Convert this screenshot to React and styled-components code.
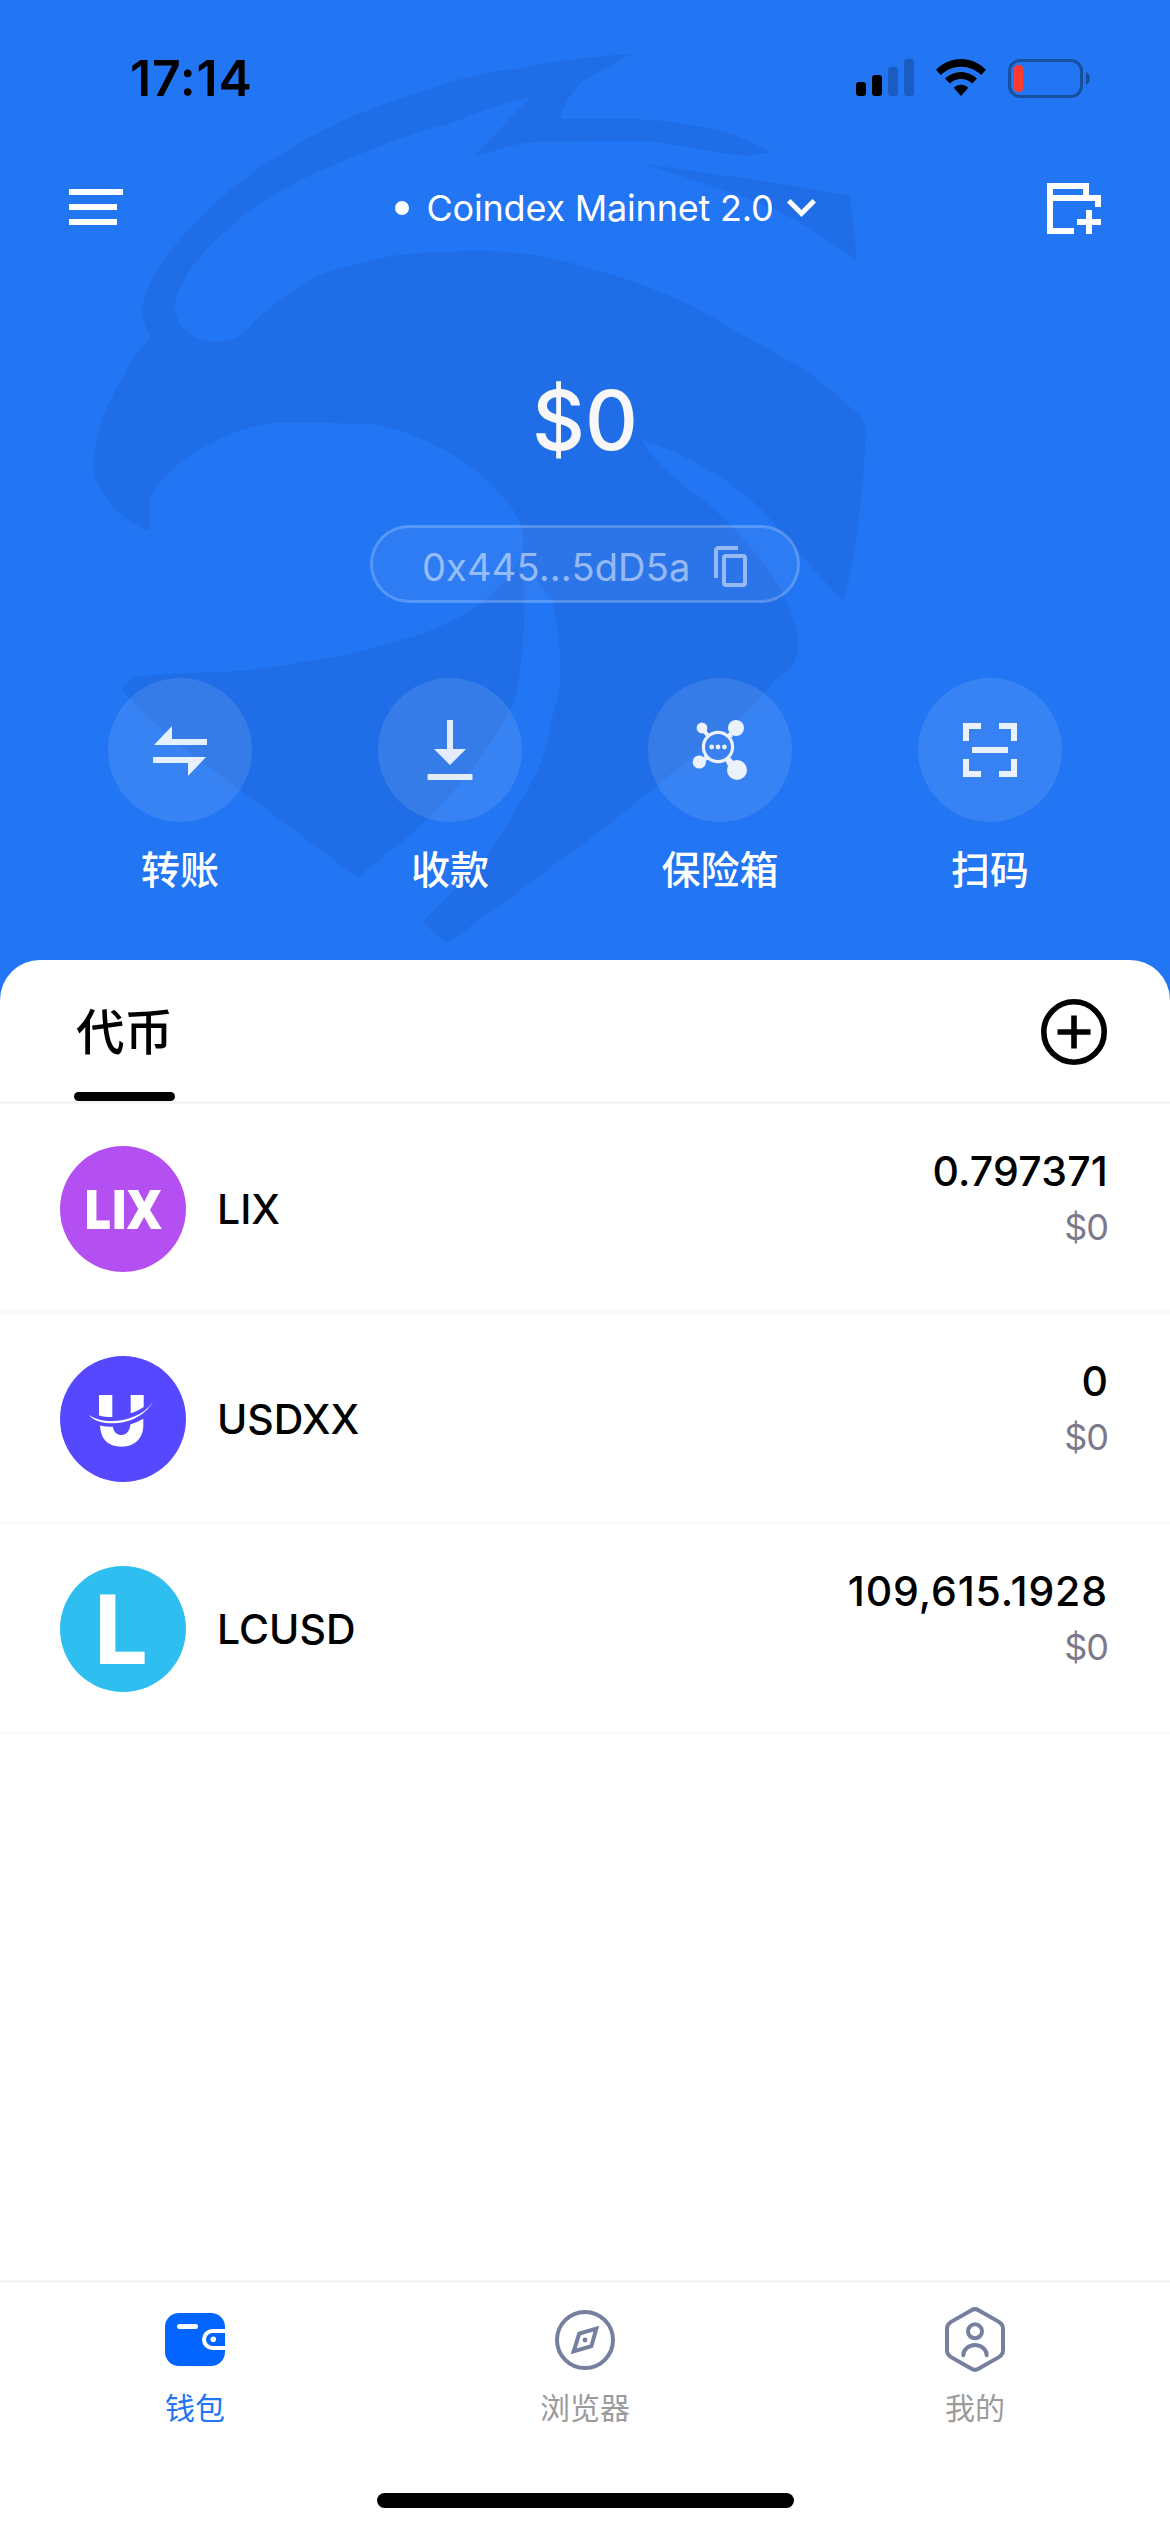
import React from "react";
import styled, { createGlobalStyle } from "styled-components";

const GlobalStyle = createGlobalStyle`
  *, *::before, *::after { box-sizing: border-box; }
  body {
    margin: 0;
    background: #fff;
    font-family: Inter, "Noto Sans CJK SC", sans-serif;
    color: #000;
  }
  button { border: 0; padding: 0; background: none; font: inherit; color: inherit; }
  svg { display: block; flex: none; overflow: visible; }
`;

const Screen = styled.main`
  width: 1170px;
  height: 2532px;
  display: flex;
  flex-direction: column;
  overflow: hidden;
  background: #2275f3;
`;

const Hero = styled.header`
  position: relative;
  height: 960px;
  flex: none;
  display: flex;
  flex-direction: column;
  color: #fff;
`;

const Watermark = styled.svg`
  position: absolute;
  left: 0;
  top: 0;
`;

const StatusBar = styled.div`
  position: relative;
  height: 156px;
  display: flex;
  justify-content: space-between;
  align-items: center;
  padding: 0 79px 0 130px;
  color: #000;
`;

const Clock = styled.time`
  font-size: 50px;
  font-weight: 600;
  line-height: 60px;
  letter-spacing: 0.8px;
`;

const StatusIcons = styled.div`
  display: flex;
  align-items: center;
  gap: 22px;
`;

const NavBar = styled.nav`
  position: relative;
  height: 104px;
  display: flex;
  justify-content: space-between;
  align-items: center;
  padding: 0 69px;
`;

const Network = styled.button`
  display: flex;
  align-items: center;
  margin-left: 40px;
  font-size: 36px;
  line-height: 48px;
  letter-spacing: -0.2px;
  white-space: nowrap;
`;

const NetworkDot = styled.span`
  width: 14px;
  height: 14px;
  margin-right: 17px;
  border-radius: 50%;
  background: #fff;
`;

const NetworkName = styled.span`
  width: 361px;
  padding-left: 1px;
  text-align: left;
`;

const Balance = styled.div`
  position: relative;
  height: 120px;
  margin-top: 101px;
  text-align: center;
  font-size: 82px;
  font-weight: 500;
  line-height: 120px;
  color: #f7f7f7;
`;

const AddressPill = styled.button`
  position: relative;
  align-self: center;
  width: 430px;
  height: 78px;
  margin-top: 44px;
  padding: 4px 50px 0 49px;
  display: flex;
  align-items: center;
  justify-content: space-between;
  border: 3px solid rgba(255, 255, 255, 0.2);
  border-radius: 39px;
  background: rgba(255, 255, 255, 0.05);
  color: rgba(255, 255, 255, 0.5);
  font-size: 38px;
  line-height: 46px;
`;

const Address = styled.span`
  padding-top: 2px;
  letter-spacing: 0.15px;
`;

const Actions = styled.div`
  position: relative;
  display: grid;
  grid-template-columns: repeat(4, 270px);
  justify-content: center;
  margin-top: 75px;
`;

const Action = styled.button`
  display: flex;
  flex-direction: column;
  align-items: center;
  gap: 20px;
`;

const ActionIcon = styled.span`
  width: 144px;
  height: 144px;
  display: flex;
  align-items: center;
  justify-content: center;
  border-radius: 50%;
  background: rgba(255, 255, 255, 0.1);
`;

const ActionLabel = styled.span`
  font-size: 39px;
  font-weight: 500;
  line-height: 56px;
`;

const Sheet = styled.section`
  flex: 1;
  display: flex;
  flex-direction: column;
  border-radius: 40px 40px 0 0;
  background: #fff;
`;

const SheetHead = styled.div`
  height: 144px;
  display: flex;
  justify-content: space-between;
  padding: 0 63px 0 74px;
  border-bottom: 3px solid #f4f4f4;
`;

const SheetTab = styled.button`
  width: 101px;
  height: 141px;
  padding-top: 37px;
  display: flex;
  flex-direction: column;
  justify-content: space-between;
  align-items: center;
  font-size: 48.5px;
  font-weight: 500;
  line-height: 72px;
`;

const TabMark = styled.span`
  width: 101px;
  height: 9px;
  border-radius: 5px;
  background: #000;
`;

const AddButton = styled.button`
  margin-top: 39px;
  height: 66px;
`;

const TokenList = styled.ul`
  flex: 1;
  margin: 0;
  padding: 0;
  list-style: none;
`;

const TokenRow = styled.li`
  height: 210px;
  display: flex;
  align-items: center;
  padding: 0 62px 0 60px;
  border-bottom: 3px solid #fafafa;
`;

const TokenLogo = styled.span`
  width: 126px;
  height: 126px;
  margin-top: 3px;
  display: flex;
  align-items: center;
  justify-content: center;
  border-radius: 50%;
  background: ${(p) => p.$color};
  color: #fff;
`;

const LogoMark = styled.span`
  font-family: "Open Sans", sans-serif;
  font-size: ${(p) => p.$size}px;
  font-weight: ${(p) => p.$weight};
  line-height: 1;
  letter-spacing: -1px;
  transform: ${(p) => p.$transform};
`;

const TokenName = styled.span`
  flex: 1;
  margin-left: 31px;
  padding-top: 2px;
  font-size: 41px;
  font-weight: 500;
`;

const TokenFigures = styled.div`
  display: flex;
  flex-direction: column;
  align-items: flex-end;
  padding-bottom: 17px;
`;

const Amount = styled.span`
  font-size: 41px;
  font-weight: 500;
  line-height: 56px;
  letter-spacing: ${(p) => p.$track}px;
`;

const Fiat = styled.span`
  font-size: 36px;
  line-height: 56px;
  letter-spacing: -1px;
  color: #7b798a;
`;

const TabBar = styled.footer`
  height: 252px;
  flex: none;
  display: flex;
  flex-direction: column;
  align-items: center;
  justify-content: space-between;
  padding-bottom: 24px;
  border-top: 3px solid #f4f4f4;
  background: #fff;
`;

const TabItems = styled.div`
  width: 100%;
  display: grid;
  grid-template-columns: repeat(3, 1fr);
`;

const TabItem = styled.button`
  display: flex;
  flex-direction: column;
  align-items: center;
  color: ${(p) => (p.$active ? "#2275f3" : "#9b9b9b")};
  font-size: 30px;
  line-height: 44px;
`;

const TabIcon = styled.span`
  height: 103px;
  padding-top: 10px;
  display: flex;
  align-items: center;
`;

const HomeIndicator = styled.div`
  width: 417px;
  height: 15px;
  border-radius: 8px;
  background: #000;
`;

const EagleMark = () => (
  <Watermark width="1170" height="960" viewBox="0 0 1170 960" fill="#206ee7" aria-hidden="true">
    <path d="M631 54 C600 56 560 60 522 68 C490 72 470 76 448 83 C400 98 370 108 336 124 C306 138 284 152 261 167 C236 184 218 200 201 217 C180 238 162 260 153 278 C144 294 142 305 142 312 C142 322 148 330 150 338 C136 352 126 370 119 384 C106 408 97 427 94 458 C90 490 122 522 149 531 L149 500 C152 488 166 474 179 464 C206 444 240 424 284 422 L373 424 C410 432 430 442 448 452 C475 466 490 482 507 501 C522 520 524 532 523 548 C516 570 500 590 478 606 C450 624 420 636 400 640 C360 652 330 660 299 662 C240 676 180 670 134 677 L121 688 C140 710 170 738 196 758 C240 790 290 826 358 878 C380 856 410 840 440 806 C480 764 515 710 517 690 C524 650 526 610 523 560 L552 600 C556 620 560 640 560 656 C562 690 556 705 552 718 C546 760 534 780 522 798 C508 826 494 846 478 866 L422 922 L446 943 C490 914 520 890 560 860 C600 832 640 800 672 773 C710 744 750 712 776 680 C792 668 798 660 798 645 C798 634 795 626 791 615 C786 596 776 580 760 560 C744 538 720 512 690 490 C672 476 654 462 642 440 C676 450 710 468 743 493 C766 512 780 530 793 547 C812 566 826 584 843 600 C856 560 862 500 866 433 C866 422 862 414 851 408 C826 382 790 360 746 337 C716 320 690 302 657 291 C630 278 600 272 567 262 C520 250 480 250 448 252 C420 252 396 254 373 260 C350 266 330 270 313 278 C290 292 276 304 261 315 C250 326 242 338 231 340 C220 342 212 342 201 340 C190 336 182 330 179 322 C174 312 174 304 176 297 C184 278 194 262 209 247 C226 230 246 212 269 198 C300 178 326 168 358 155 C390 142 420 130 448 124 C476 114 500 102 530 98 L474 156 C500 150 516 142 537 142 L642 141 C680 144 712 152 746 156 L769 152 C752 142 736 134 716 130 C690 124 662 120 634 119 L560 119 C562 104 574 90 582 82 C596 74 612 64 631 54 Z" />
    <path d="M642 163 C690 172 770 180 850 196 L857 262 C836 246 808 226 780 212 C746 196 700 182 642 163 Z" />
  </Watermark>
);

const SignalIcon = () => (
  <svg width="58" height="38" viewBox="0 0 58 38">
    <rect x="0" y="23" width="10" height="14" rx="3" />
    <rect x="16" y="16" width="10" height="21" rx="3" />
    <rect x="32" y="8" width="10" height="29" rx="3" fill="#1a5cbf" />
    <rect x="48" y="0" width="10" height="37" rx="3" fill="#1a5cbf" />
  </svg>
);

const WifiIcon = () => (
  <svg width="50" height="38" viewBox="0 0 50 38">
    <path d="M0 10.8 C14 -3.5 36 -3.5 50 10.8 L45.2 16 C34 5 16 5 4.8 16 Z" />
    <path d="M9 19.5 C18 10.8 32 10.8 41 19.5 L36.2 24.5 C30 18.6 20 18.6 13.8 24.5 Z" />
    <path d="M17.8 28.7 C22 24.6 28 24.6 32.2 28.7 L25 37 Z" />
  </svg>
);

const BatteryIcon = () => (
  <svg width="83" height="39" viewBox="0 0 83 39">
    <rect x="1.5" y="1.5" width="72" height="36" rx="10.5" fill="none" stroke="#18509f" strokeWidth="3" />
    <rect x="6" y="6" width="9" height="27" rx="4" fill="#ff3b30" />
    <path d="M78 13 C83 15 83 24 78 26 Z" fill="#18509f" />
  </svg>
);

const MenuIcon = () => (
  <svg width="54" height="38" viewBox="0 0 54 38" fill="#fff">
    <path d="M0 0H54V6H0Z M0 15H48V21H0Z M0 30H48V36H0Z" />
  </svg>
);

const ChevronIcon = () => (
  <svg width="29" height="18" viewBox="0 0 29 18" fill="none" stroke="#fff" strokeWidth="5">
    <path d="M1.8 1.8 L14.5 14.5 L27.2 1.8" />
  </svg>
);

const AddWalletIcon = () => (
  <svg width="54" height="51" viewBox="0 0 54 51" fill="none" stroke="#fff" strokeWidth="6">
    <path d="M27 48H3V3H39V15M3 15H51V24M42 27V51M30 39H54" />
  </svg>
);

const CopyIcon = () => (
  <svg width="33" height="41" viewBox="0 0 33 41" fill="none" stroke="currentColor" strokeWidth="4">
    <path d="M2 32V5Q2 2 5 2H24" />
    <rect x="10" y="10" width="21" height="29" rx="2" />
  </svg>
);

const TransferIcon = () => (
  <svg width="54" height="54" viewBox="0 0 54 54" fill="#fff" opacity="0.88">
    <path d="M1 22 L19 3 V16 H54 V22 Z M0 34 H53 L35 53 V40 H0 Z" />
  </svg>
);

const ReceiveIcon = () => (
  <svg width="60" height="60" viewBox="0 0 60 60" fill="#fff" opacity="0.86">
    <path d="M27 0H33V29H46L30 45L14 29H27Z" />
    <rect x="7.5" y="54" width="45" height="6" rx="1" />
  </svg>
);

const VaultIcon = () => (
  <svg width="60" height="60" viewBox="0 0 60 60" fill="#ebf1fd">
    <circle cx="47" cy="50" r="10" />
    <circle cx="46" cy="8" r="8" />
    <circle cx="12" cy="8" r="5.4" />
    <circle cx="9.3" cy="42" r="6.6" />
    <path d="M15 10 L21 17 L17 19 Z M39 13 L43 16 L39 20 L35 16 Z M13 38 L17 34 L20 38 L14 42 Z M35 40 L39 36 L45 43 L38 46 Z" />
    <path d="M12 8L19 17M46 8L38 17M9.3 42L18 37M47 50L37 38" stroke="#ebf1fd" strokeWidth="4" />
    <circle cx="28" cy="27" r="14.6" fill="#3a80ee" stroke="#ebf1fd" strokeWidth="3.2" />
    <circle cx="21.7" cy="27" r="2.4" />
    <circle cx="28" cy="27" r="2.4" />
    <circle cx="34.4" cy="27" r="2.4" />
  </svg>
);

const ScanIcon = () => (
  <svg width="54" height="54" viewBox="0 0 54 54" fill="none" stroke="#ebf1fd" strokeWidth="6">
    <path d="M3 18V3H18M36 3H51V18M51 36V51H36M18 51H3V36M9 27H45" />
  </svg>
);

const AddIcon = () => (
  <svg width="66" height="66" viewBox="0 0 66 66" fill="none" stroke="#000" strokeWidth="5.6">
    <circle cx="33" cy="33" r="30.2" />
    <path d="M33 16.5V49.5M16.5 33H49.5" />
  </svg>
);

const SmileLogo = () => (
  <svg width="126" height="126" viewBox="0 0 126 126" fill="#fff">
    <path d="M39 39H52.3V61C47 61 43 60.5 39 59.5Z M70.7 39H83.7V51C80 53.6 76 55.6 70.7 57.3Z" />
    <path d="M40 69.5Q46 71 53 70.7C53.5 76 57 79 61.7 79C66.5 79 70 75 70.3 68.6Q77 66.5 83.3 62.8V70C83 83 74 90.7 61.5 90.7C48 90.7 40.5 83 40 69.5Z" />
    <path d="M29 58.7C36 71 77 73 93 46C77 68 42 69 29 58.7Z" />
  </svg>
);

const WalletTabIcon = () => (
  <svg width="60" height="53" viewBox="0 0 60 53">
    <rect width="60" height="53" rx="14" fill="#0265ff" />
    <rect x="12" y="11" width="21" height="5" rx="2.5" fill="#fff" />
    <path d="M60.5 18H47.5a8.5 8.5 0 0 0 0 17H60.5" fill="none" stroke="#fff" strokeWidth="4" />
    <circle cx="48.3" cy="26.2" r="2.8" fill="#fff" />
  </svg>
);

const BrowserTabIcon = () => (
  <svg width="60" height="60" viewBox="0 0 60 60" fill="none" stroke="#767fa0" strokeWidth="4">
    <circle cx="30" cy="30" r="28" />
    <path d="M41.3 18.7 L24.2 23.7 L18.7 41.3 L36.4 36.2 Z" />
    <circle cx="30" cy="30" r="2.4" fill="#767fa0" stroke="none" />
  </svg>
);

const ProfileTabIcon = () => (
  <svg width="60" height="65" viewBox="0 0 60 65" fill="none" stroke="#767fa0" strokeWidth="4">
    <path d="M26.5 3.2Q30 1 33.5 3.2L53.5 14.6Q58 17.4 58 21.5V43.5Q58 47.6 53.5 50.4L33.5 61.8Q30 64 26.5 61.8L6.5 50.4Q2 47.6 2 43.5V21.5Q2 17.4 6.5 14.6Z" />
    <circle cx="30" cy="24.3" r="7" />
    <path d="M18.3 48.3A11.7 10.3 0 0 1 41.7 48.3" strokeLinecap="round" />
  </svg>
);

const actions = [
  { label: "转账", Icon: TransferIcon },
  { label: "收款", Icon: ReceiveIcon },
  { label: "保险箱", Icon: VaultIcon },
  { label: "扫码", Icon: ScanIcon },
];

const tokens = [
  {
    name: "LIX",
    amount: "0.797371",
    track: 0.2,
    color: "#b44ff2",
    logo: (
      <LogoMark $size={54} $weight={800} $transform="translate(-1px, -1px) scaleX(0.9)">
        LIX
      </LogoMark>
    ),
  },
  { name: "USDXX", amount: "0", track: 0, color: "#5548fe", logo: <SmileLogo /> },
  {
    name: "LCUSD",
    amount: "109,615.1928",
    track: 0.9,
    color: "#2fbef0",
    logo: (
      <LogoMark $size={97} $weight={700} $transform="translate(-4px, -3px) scaleX(1.04)">
        L
      </LogoMark>
    ),
  },
];

const tabs = [
  { label: "钱包", Icon: WalletTabIcon, active: true },
  { label: "浏览器", Icon: BrowserTabIcon },
  { label: "我的", Icon: ProfileTabIcon },
];

export default function App() {
  return (
    <Screen>
      <GlobalStyle />
      <Hero>
        <EagleMark />
        <StatusBar>
          <Clock>17:14</Clock>
          <StatusIcons>
            <SignalIcon />
            <WifiIcon />
            <BatteryIcon />
          </StatusIcons>
        </StatusBar>
        <NavBar>
          <MenuIcon />
          <Network>
            <NetworkDot />
            <NetworkName>Coindex Mainnet 2.0</NetworkName>
            <ChevronIcon />
          </Network>
          <AddWalletIcon />
        </NavBar>
        <Balance>$0</Balance>
        <AddressPill>
          <Address>0x445...5dD5a</Address>
          <CopyIcon />
        </AddressPill>
        <Actions>
          {actions.map(({ label, Icon }) => (
            <Action key={label}>
              <ActionIcon>
                <Icon />
              </ActionIcon>
              <ActionLabel>{label}</ActionLabel>
            </Action>
          ))}
        </Actions>
      </Hero>
      <Sheet>
        <SheetHead>
          <SheetTab>
            代币
            <TabMark />
          </SheetTab>
          <AddButton>
            <AddIcon />
          </AddButton>
        </SheetHead>
        <TokenList>
          {tokens.map((t) => (
            <TokenRow key={t.name}>
              <TokenLogo $color={t.color}>{t.logo}</TokenLogo>
              <TokenName>{t.name}</TokenName>
              <TokenFigures>
                <Amount $track={t.track}>{t.amount}</Amount>
                <Fiat>$0</Fiat>
              </TokenFigures>
            </TokenRow>
          ))}
        </TokenList>
        <TabBar>
          <TabItems>
            {tabs.map(({ label, Icon, active }) => (
              <TabItem key={label} $active={active}>
                <TabIcon>
                  <Icon />
                </TabIcon>
                {label}
              </TabItem>
            ))}
          </TabItems>
          <HomeIndicator />
        </TabBar>
      </Sheet>
    </Screen>
  );
}
